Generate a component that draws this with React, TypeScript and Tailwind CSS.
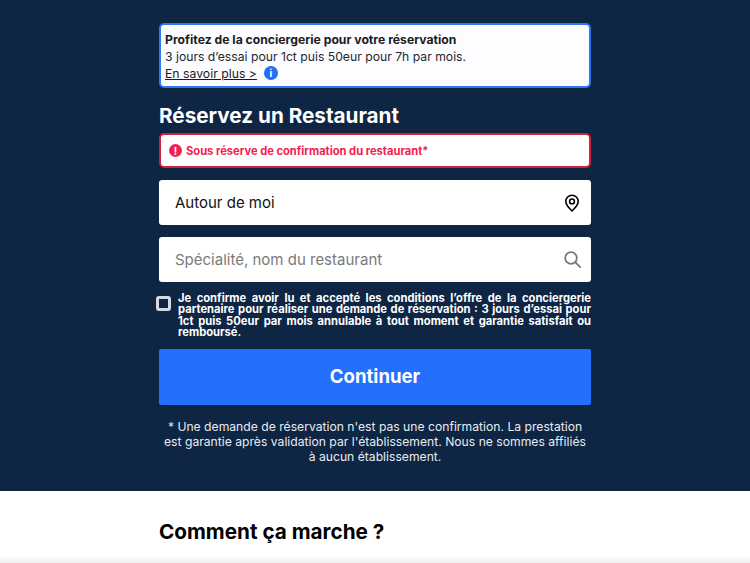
function PinIcon() {
  return (
    <svg width="16" height="18" viewBox="0 0 16 18" fill="none" stroke="#000" strokeWidth="1.6">
      <path d="M8 17c-1.2-1.4-6.2-5.6-6.2-9.6a6.2 6.2 0 0 1 12.4 0C14.2 11.4 9.2 15.6 8 17z" strokeLinejoin="round" />
      <circle cx="8" cy="7.4" r="2.4" />
    </svg>
  );
}

function SearchIcon() {
  return (
    <svg width="17" height="17" viewBox="0 0 17 17" fill="none" stroke="#757575" strokeWidth="1.7">
      <circle cx="7" cy="7" r="5.8" />
      <path d="M11.2 11.2l5 5" strokeLinecap="round" />
    </svg>
  );
}

export default function App() {
  return (
    <div className="h-[563px] overflow-hidden bg-white font-['Inter',sans-serif]">
      <section className="h-[491px] bg-[#0e2544] pt-[23px]">
        <div className="mx-auto w-[432px]">
          <div className="h-[65px] rounded-[5px] border-2 border-[#2d78f5] bg-[#fdfdff] pl-[4px] pt-[7px] text-[#1b1b24]">
            <p className="text-[12.2px] font-bold leading-[16px]">Profitez de la conciergerie pour votre réservation</p>
            <p className="text-[12.2px] leading-[17px] text-[#26262e]">3 jours d’essai pour 1ct puis 50eur pour 7h par mois.</p>
            <div className="flex h-[18px] items-center gap-[7px]">
              <span className="text-[12.25px] leading-[18px] underline">En savoir plus &gt;</span>
              <span className="mt-[-2px] flex h-[14px] w-[14px] items-center justify-center rounded-full bg-[#2470f5] text-[10px] font-bold leading-none text-white">i</span>
            </div>
          </div>

          <h1 className="mt-[14px] text-[20.7px] font-bold leading-[28px] text-white">Réservez un Restaurant</h1>

          <div className="mt-[3px] flex h-[35px] items-center gap-[3px] rounded-[5px] border-2 border-[#d0203c] bg-white pl-[8px] pt-[1px]">
            <span className="mt-[-1px] flex h-[13px] w-[13px] items-center justify-center rounded-full bg-[#f5204f] text-[10px] font-bold leading-none text-white">!</span>
            <span className="ml-[1px] text-[11.15px] font-bold text-[#f5204f]">Sous réserve de confirmation du restaurant*</span>
          </div>

          <div className="mt-[12px] flex h-[45px] items-center justify-between rounded-[3px] bg-white pl-[16px] pr-[11px]">
            <span className="pt-[1px] text-[15px] text-[#111]">Autour de moi</span>
            <PinIcon />
          </div>

          <div className="mt-[12px] flex h-[45px] items-center justify-between rounded-[3px] bg-white pl-[16px] pr-[10px]">
            <span className="pt-[1px] text-[15px] text-[#7a7a7a]">Spécialité, nom du restaurant</span>
            <SearchIcon />
          </div>

          <div className="mt-[11px] flex">
            <span className="ml-[-3px] mt-[3px] h-[15px] w-[15px] shrink-0 rounded-[3px] border-[3px] border-[#d5dae3] bg-[#0e2544]" />
            <p className="ml-[7px] text-justify text-[11.2px] font-bold leading-[11.4px] text-white">
              Je confirme avoir lu et accepté les conditions l’offre de la conciergerie partenaire pour réaliser une demande de réservation : 3 jours d’essai pour 1ct puis 50eur par mois annulable à tout moment et garantie satisfait ou remboursé.
            </p>
          </div>

          <button className="mt-[10px] block h-[56px] w-full rounded-[2px] bg-[#2470fd] pt-[1px] text-[18.6px] font-bold text-white">Continuer</button>

          <p className="mt-[14px] text-center text-[12.17px] leading-[15px] text-[#e9ecf1]">
            * Une demande de réservation n'est pas une confirmation. La prestation est garantie après validation par l'établissement. Nous ne sommes affiliés à aucun établissement.
          </p>
        </div>
      </section>

      <section className="relative h-[72px] bg-white">
        <div className="mx-auto w-[432px] pt-[27px]">
          <h2 className="text-[20.7px] font-bold leading-[28px] text-black">Comment ça marche ?</h2>
        </div>
        <div className="absolute bottom-0 left-0 h-[8px] w-full bg-gradient-to-b from-white to-[#eeeeee]" />
      </section>
    </div>
  );
}
